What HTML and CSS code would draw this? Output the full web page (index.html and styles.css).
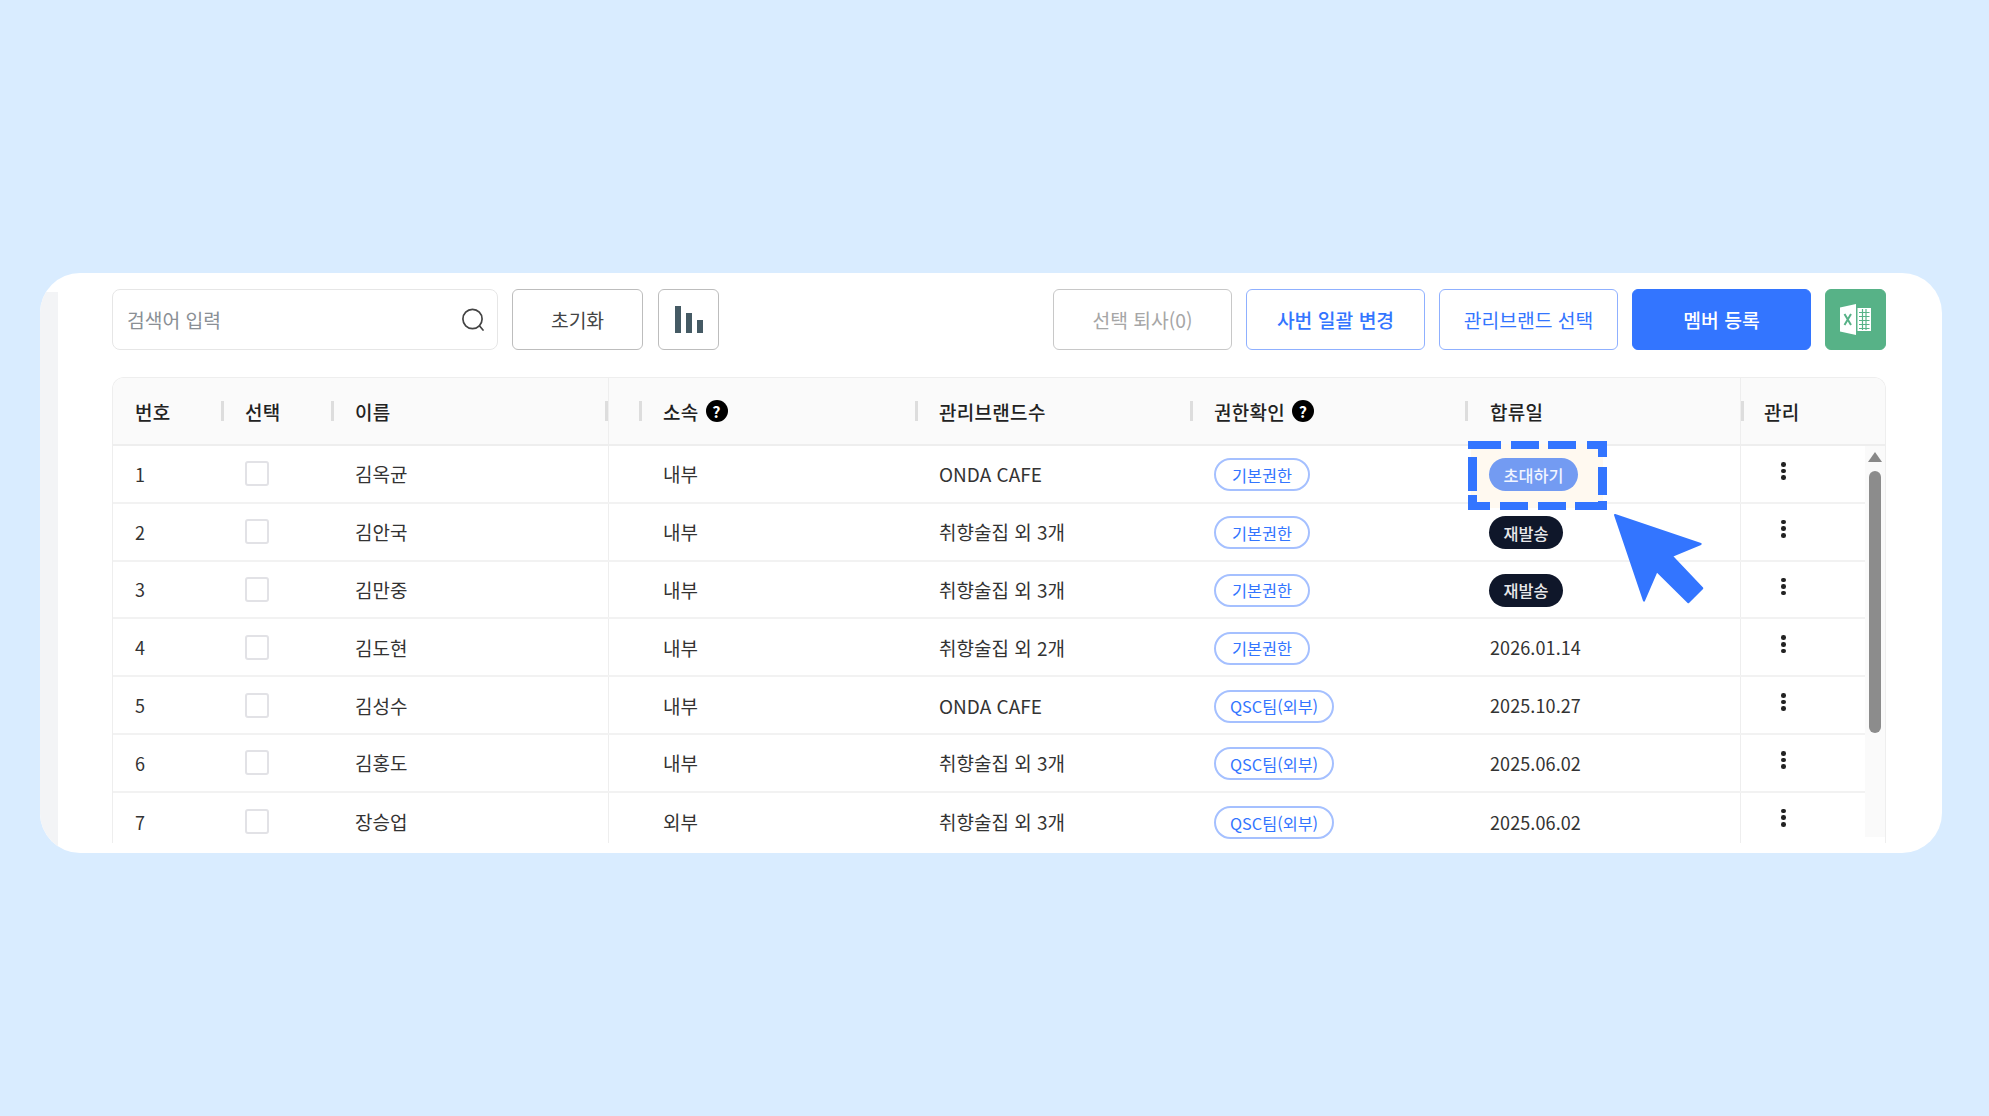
FILE: index.html
```html
<!DOCTYPE html>
<html lang="ko">
<head>
    <meta charset="UTF-8">
    <meta name="viewport" content="width=device-width, initial-scale=1.0">
    <title>멤버 관리</title>
    <link rel="stylesheet" href="styles.css">
</head>
<body>
    <div class="card">
        <div class="gutter"></div>
        <div class="main">
            <div class="toolbar">
                <div class="search">
                    <span class="search-text">검색어 입력</span>
                    <svg class="search-icon" width="26" height="26" viewBox="0 0 26 26" fill="none" stroke="#444" stroke-width="1.7" stroke-linecap="round">
                        <circle cx="12.5" cy="12" r="9.6"/>
                        <path d="M19.6 19 L23 23"/>
                    </svg>
                </div>
                <button class="btn btn-reset">초기화</button>
                <button class="btn btn-chart" aria-label="통계">
                    <span class="bar bar-1"></span><span class="bar bar-2"></span><span class="bar bar-3"></span>
                </button>
                <div class="spacer"></div>
                <button class="btn btn-wide btn-muted">선택 퇴사(0)</button>
                <button class="btn btn-wide btn-line btn-strong">사번 일괄 변경</button>
                <button class="btn btn-wide btn-line">관리브랜드 선택</button>
                <button class="btn btn-wide btn-primary">멤버 등록</button>
                <button class="btn btn-excel" aria-label="엑셀">
                    <svg width="31" height="31" viewBox="0 0 31 31">
                        <path d="M0 3.5 L16 0 V31 L0 27.5 Z" fill="#fff"/>
                        <path d="M4.5 10 L11 21 M11 10 L4.5 21" stroke="#57b287" stroke-width="2" fill="none"/>
                        <path d="M17.5 4 H31 V27 H17.5 Z" fill="#fff"/>
                        <path d="M19 8.5 H29.5 M19 12.5 H29.5 M19 16.5 H29.5 M19 20.5 H29.5 M19 24.5 H29.5 M22.5 5 V26 M26 5 V26" stroke="#57b287" stroke-width="1.2" fill="none"/>
                    </svg>
                </button>
            </div>

            <div class="table">
                <div class="table-head grid">
                    <div class="th">번호</div>
                    <div class="th"><i class="sep"></i>선택</div>
                    <div class="th th-name"><i class="sep"></i>이름<i class="sep sep-end"></i></div>
                    <div class="th th-blank"></div>
                    <div class="th"><i class="sep"></i>소속<span class="help">?</span></div>
                    <div class="th"><i class="sep"></i>관리브랜드수</div>
                    <div class="th"><i class="sep"></i>권한확인<span class="help">?</span></div>
                    <div class="th th-join"><i class="sep"></i>합류일</div>
                    <div class="th th-manage"><i class="sep"></i>관리</div>
                </div>

                <div class="table-body">
                    <div class="rows">
                        <div class="row grid">
                            <div class="td td-num">1</div>
                            <div class="td"><span class="check"></span></div>
                            <div class="td td-name">김옥균</div>
                            <div class="td"></div>
                            <div class="td">내부</div>
                            <div class="td">ONDA CAFE</div>
                            <div class="td"><span class="pill pill-line">기본권한</span></div>
                            <div class="td"><span class="pill pill-invite">초대하기</span></div>
                            <div class="td td-manage"><span class="dots"><b></b><b></b><b></b></span></div>
                        </div>
                        <div class="row grid">
                            <div class="td td-num">2</div>
                            <div class="td"><span class="check"></span></div>
                            <div class="td td-name">김안국</div>
                            <div class="td"></div>
                            <div class="td">내부</div>
                            <div class="td">취향술집 외 3개</div>
                            <div class="td"><span class="pill pill-line">기본권한</span></div>
                            <div class="td"><span class="pill pill-dark">재발송</span></div>
                            <div class="td td-manage"><span class="dots"><b></b><b></b><b></b></span></div>
                        </div>
                        <div class="row grid">
                            <div class="td td-num">3</div>
                            <div class="td"><span class="check"></span></div>
                            <div class="td td-name">김만중</div>
                            <div class="td"></div>
                            <div class="td">내부</div>
                            <div class="td">취향술집 외 3개</div>
                            <div class="td"><span class="pill pill-line">기본권한</span></div>
                            <div class="td"><span class="pill pill-dark">재발송</span></div>
                            <div class="td td-manage"><span class="dots"><b></b><b></b><b></b></span></div>
                        </div>
                        <div class="row grid">
                            <div class="td td-num">4</div>
                            <div class="td"><span class="check"></span></div>
                            <div class="td td-name">김도현</div>
                            <div class="td"></div>
                            <div class="td">내부</div>
                            <div class="td">취향술집 외 2개</div>
                            <div class="td"><span class="pill pill-line">기본권한</span></div>
                            <div class="td td-date">2026.01.14</div>
                            <div class="td td-manage"><span class="dots"><b></b><b></b><b></b></span></div>
                        </div>
                        <div class="row grid">
                            <div class="td td-num">5</div>
                            <div class="td"><span class="check"></span></div>
                            <div class="td td-name">김성수</div>
                            <div class="td"></div>
                            <div class="td">내부</div>
                            <div class="td">ONDA CAFE</div>
                            <div class="td"><span class="pill pill-line pill-qsc">QSC팀(외부)</span></div>
                            <div class="td td-date">2025.10.27</div>
                            <div class="td td-manage"><span class="dots"><b></b><b></b><b></b></span></div>
                        </div>
                        <div class="row grid">
                            <div class="td td-num">6</div>
                            <div class="td"><span class="check"></span></div>
                            <div class="td td-name">김홍도</div>
                            <div class="td"></div>
                            <div class="td">내부</div>
                            <div class="td">취향술집 외 3개</div>
                            <div class="td"><span class="pill pill-line pill-qsc">QSC팀(외부)</span></div>
                            <div class="td td-date">2025.06.02</div>
                            <div class="td td-manage"><span class="dots"><b></b><b></b><b></b></span></div>
                        </div>
                        <div class="row row-last grid">
                            <div class="td td-num">7</div>
                            <div class="td"><span class="check"></span></div>
                            <div class="td td-name">장승업</div>
                            <div class="td"></div>
                            <div class="td">외부</div>
                            <div class="td">취향술집 외 3개</div>
                            <div class="td"><span class="pill pill-line pill-qsc">QSC팀(외부)</span></div>
                            <div class="td td-date">2025.06.02</div>
                            <div class="td td-manage"><span class="dots"><b></b><b></b><b></b></span></div>
                        </div>
                    </div>
                    <div class="scrollbar">
                        <span class="scroll-up"></span>
                        <span class="scroll-thumb"></span>
                    </div>
                </div>
            </div>
        </div>

        <!-- dashed highlight + cursor drawn over the table -->
        <svg class="overlay" width="240" height="170" viewBox="0 0 240 170">
            <rect x="3" y="3" width="132" height="64" fill="#fff9f0"/>
            <g fill="#3375ff">
                <rect x="0" y="0" width="33" height="8"/>
                <rect x="43" y="0" width="28" height="8"/>
                <rect x="80" y="0" width="28" height="8"/>
                <rect x="119" y="0" width="20" height="8"/>
                <rect x="130" y="0" width="9" height="16"/>
                <rect x="130" y="26" width="9" height="28"/>
                <rect x="130" y="60" width="9" height="9"/>
                <rect x="0" y="0" width="9" height="7"/>
                <rect x="0" y="16" width="9" height="34"/>
                <rect x="0" y="54" width="9" height="15"/>
                <rect x="0" y="61" width="22" height="8"/>
                <rect x="32" y="61" width="28" height="8"/>
                <rect x="70" y="61" width="28" height="8"/>
                <rect x="107" y="61" width="32" height="8"/>
            </g>
            <path d="M147 74 L232.700 103 L203.700 115 L234.300 147.300 L220.300 161.300 L188.700 130 L176 159.700 Z" fill="#3375ff" stroke="#3375ff" stroke-width="2" stroke-linejoin="round"/>
        </svg>
    </div>
</body>
</html>
```

FILE: styles.css
```css
* {
    box-sizing: border-box;
}
html, body {
    height: 100%;
}
body {
    margin: 0;
    padding: 273px 47px 0 40px;
    background-color: #d9ecff;
    font-family: "Noto Sans CJK KR", "Noto Sans", sans-serif;
    font-size: 19px;
    color: #333;
    overflow: hidden;
}
button {
    font-family: inherit;
    cursor: pointer;
}

.card {
    position: relative;
    display: flex;
    height: 580px;
    background-color: white;
    border-radius: 40px;
    overflow: hidden;
}
.gutter {
    flex: 0 0 18px;
    margin-top: 19px;
    background-color: #f3f4f6;
}
.main {
    flex: 1;
    display: flex;
    flex-direction: column;
    min-width: 0;
    padding: 16px 56px 10px 54px;
}

/* toolbar */
.toolbar {
    display: flex;
    flex: none;
    gap: 14px;
    height: 61px;
    margin-bottom: 27px;
}
.spacer {
    flex: 1;
}
.search {
    display: flex;
    align-items: center;
    justify-content: space-between;
    width: 386px;
    padding: 0 11px 0 14px;
    border: 1px solid #e6e6e6;
    border-radius: 8px;
}
.search-text {
    font-size: 19.3px;
    color: #8a8f95;
}
.btn {
    height: 61px;
    padding: 0;
    font-size: 19.3px;
    background-color: white;
    border: 1px solid #bdbdbd;
    border-radius: 6px;
    color: #444;
}
.btn-reset {
    width: 131px;
}
.btn-chart {
    display: flex;
    align-items: flex-end;
    justify-content: center;
    gap: 5px;
    width: 61px;
    margin-left: 1px;
    padding-bottom: 16px;
}
.bar {
    width: 6px;
    background-color: #455a64;
}
.bar-1 {
    height: 27px;
}
.bar-2 {
    height: 20px;
}
.bar-3 {
    height: 13px;
}
.btn-wide {
    width: 179px;
}
.btn-muted {
    color: #a6a6a6;
    border-color: #c8c8c8;
}
.btn-line {
    color: #3375ff;
    border-color: #8fb0ff;
}
.btn-strong {
    font-weight: 500;
}
.btn-primary {
    color: white;
    font-weight: 500;
    background-color: #3375ff;
    border-color: #3375ff;
}
.btn-excel {
    display: flex;
    align-items: center;
    justify-content: center;
    width: 61px;
    background-color: #57b287;
    border-color: #57b287;
}

/* table */
.table {
    flex: 1;
    display: flex;
    flex-direction: column;
    min-height: 0;
    border: 1px solid #eeeeee;
    border-bottom: none;
    border-radius: 12px 12px 0 0;
    overflow: hidden;
}
.grid {
    display: grid;
    grid-template-columns: 108px 110px 278px 30px 276px 275px 275px 275px 1fr;
}
.table-head {
    flex: 0 0 68px;
    background-color: #fafafa;
    border-bottom: 2px solid #eeeeee;
}
.th {
    display: flex;
    align-items: center;
    font-weight: 500;
    letter-spacing: 0.3px;
    color: #222;
}
.th:first-child {
    padding-left: 22px;
}
.th-name {
    border-right: 1px solid #eeeeee;
}
.th-manage {
    border-left: 1px solid #eeeeee;
}
.sep {
    flex: none;
    width: 3px;
    height: 20px;
    margin-right: 21px;
    background-color: #dddddd;
}
.sep-end {
    margin: 0 0 0 auto;
}
.th-join .sep {
    margin-right: 22px;
}
.th-manage .sep {
    margin-right: 20px;
}
.help {
    display: flex;
    align-items: center;
    justify-content: center;
    width: 22px;
    height: 22px;
    margin-left: 7px;
    font-size: 16px;
    font-weight: 700;
    color: white;
    background-color: black;
    border-radius: 50%;
}

.table-body {
    flex: 1;
    display: flex;
    min-height: 0;
}
.rows {
    flex: 1;
    min-width: 0;
}
.row {
    height: 57.8px;
    border-bottom: 2px solid #f2f2f2;
}
.row-last {
    border-bottom: none;
}
.td {
    display: flex;
    align-items: center;
    padding-left: 24px;
}
.td-num {
    padding-left: 22px;
    font-size: 18px;
}
.td-date {
    padding-left: 25px;
    font-size: 18px;
    letter-spacing: 0.1px;
}
.td-name {
    border-right: 1px solid #eeeeee;
}
.td-manage {
    justify-content: flex-start;
    align-items: flex-start;
    padding: 16px 0 0 40px;
    border-left: 1px solid #eeeeee;
}
.check {
    width: 24px;
    height: 25px;
    background-color: white;
    border: 2px solid #e2e2e6;
    border-radius: 3px;
}
.pill {
    position: relative;
    z-index: 1;
    display: inline-flex;
    align-items: center;
    height: 33px;
    margin-top: 2px;
    padding: 0 14.5px;
    font-size: 16.3px;
    border-radius: 17px;
}
.pill-line {
    padding: 0 16px;
    color: #3375ff;
    background-color: white;
    border: 2px solid #a5c0ff;
}
.pill-qsc {
    padding: 0 14px;
}
.pill-invite {
    color: #f1f5ff;
    font-weight: 500;
    background-color: #739bf2;
}
.pill-dark {
    color: #e8e8ea;
    font-weight: 500;
    background-color: #0f172a;
}
.dots {
    display: flex;
    flex-direction: column;
    gap: 2px;
}
.dots b {
    display: block;
    width: 4.6px;
    height: 4.6px;
    background-color: #222;
    border-radius: 50%;
}

/* scrollbar */
.scrollbar {
    flex: 0 0 20px;
    display: flex;
    flex-direction: column;
    align-items: center;
    padding-top: 6px;
    margin-bottom: 6px;
    background-color: #fafafa;
}
.scroll-up {
    width: 0;
    height: 0;
    border-left: 7px solid transparent;
    border-right: 7px solid transparent;
    border-bottom: 10px solid #888888;
}
.scroll-thumb {
    width: 12px;
    height: 262px;
    margin-top: 9px;
    background-color: #8c8c8c;
    border-radius: 6px;
}

/* highlight and cursor, free on top of the card */
.overlay {
    position: absolute;
    left: 1428px;
    top: 168px;
}
```
